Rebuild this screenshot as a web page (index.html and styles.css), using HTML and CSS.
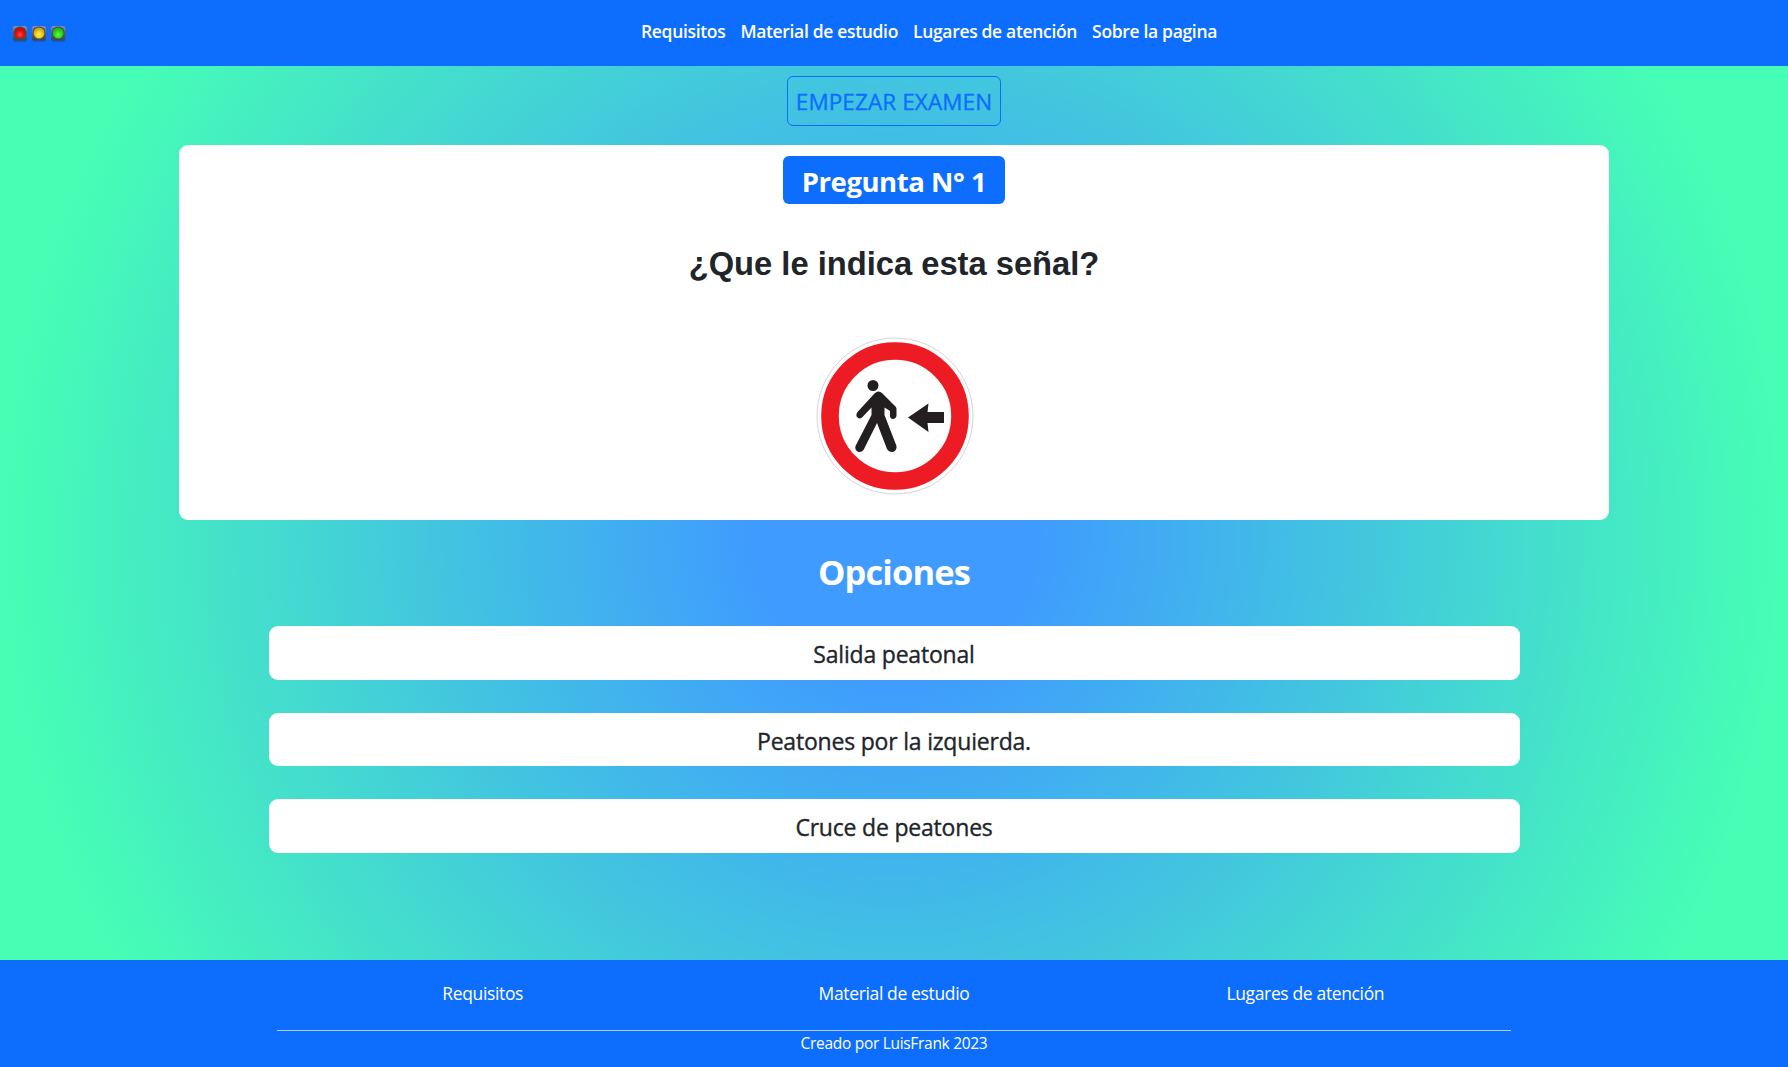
FILE: index.html
```html
<!DOCTYPE html>
<html lang="es">
<head>
<meta charset="utf-8">
<title>Examen de manejo</title>
<link rel="stylesheet" href="styles.css">
</head>
<body>
<header class="topbar">
  <svg class="logo" width="56" height="18" viewBox="0 0 56 18">
    <defs>
      <linearGradient id="case" x1="0" y1="0" x2="0" y2="1"><stop offset="0" stop-color="#8292b4"/><stop offset=".45" stop-color="#606570"/><stop offset="1" stop-color="#3c454b"/></linearGradient>
      <radialGradient id="red" cy=".65"><stop offset="0" stop-color="#ff5145"/><stop offset=".5" stop-color="#ee1712"/><stop offset="1" stop-color="#c80c0c"/></radialGradient>
      <radialGradient id="yellow" cy=".65"><stop offset="0" stop-color="#fff04a"/><stop offset=".5" stop-color="#f2d421"/><stop offset="1" stop-color="#cda91c"/></radialGradient>
      <radialGradient id="green" cy=".65"><stop offset="0" stop-color="#6dff45"/><stop offset=".5" stop-color="#31e51e"/><stop offset="1" stop-color="#25b81b"/></radialGradient>
    </defs>
    <g fill="#174a9c" opacity=".55"><rect x="1" y="3" width="14" height="14" rx="3"/><rect x="20" y="3" width="14" height="14" rx="3"/><rect x="39.300" y="3" width="14" height="14" rx="3"/></g>
    <g fill="url(#case)"><rect x=".8" y="1" width="14.300" height="14.500" rx="2.500"/><rect x="19.800" y="1" width="14.300" height="14.500" rx="2.500"/><rect x="39" y="1" width="14.300" height="14.500" rx="2.500"/></g>
    <g fill="#43484b"><circle cx="8" cy="7.800" r="6.300"/><circle cx="27" cy="7.800" r="6.300"/><circle cx="46.200" cy="7.800" r="6.300"/></g>
    <circle cx="8" cy="8" r="5.500" fill="url(#red)"/><circle cx="27" cy="8" r="5.500" fill="url(#yellow)"/><circle cx="46.200" cy="8" r="5.500" fill="url(#green)"/>
  </svg>
  <nav class="menu"><a>Requisitos</a><a>Material de estudio</a><a>Lugares de atención</a><a>Sobre la pagina</a></nav>
</header>
<main class="exam">
  <button class="start">EMPEZAR EXAMEN</button>
  <section class="question">
    <h2 class="number">Pregunta N° 1</h2>
    <h1 class="statement">¿Que le indica esta señal?</h1>
    <svg class="sign" width="160" height="160" viewBox="0 0 160 160">
      <circle cx="80" cy="80" r="78" fill="#fff" stroke="#d5d5da" stroke-width="1"/>
      <circle cx="80" cy="80" r="65" fill="#fff" stroke="#ed1c24" stroke-width="17.600"/>
      <g fill="#231f20">
        <circle cx="58" cy="49.500" r="5.500"/>
        <path d="M59.500 57.500Q63.500 53.500 67.500 57.500L80.500 70.500Q81.500 71.500 81.500 73V80Q80.500 83 78 83Q75 82.500 75 80V75L69.500 71.500V79L81.500 110Q82 114.500 78 116Q74 116.500 72 113L62 87L48.500 114Q46 117 42.500 115.500Q39.500 113.500 40.500 110L56.500 79V71.500L47 81.500Q44 83.500 42 81Q40.500 79 42.500 76Z"/>
        <path d="M93 81.500L113.500 67.500L112.500 76H129V87H112.500L113.500 96Z"/>
      </g>
    </svg>
  </section>
  <h2 class="options-title">Opciones</h2>
  <div class="options"><div class="option">Salida peatonal</div><div class="option">Peatones por la izquierda.</div><div class="option">Cruce de peatones</div></div>
</main>
<footer class="footer">
  <div class="links"><a>Requisitos</a><a>Material de estudio</a><a>Lugares de atención</a></div>
  <div class="credit">Creado por LuisFrank 2023</div>
</footer>
</body>
</html>
```
FILE: styles.css
```css
* { box-sizing: border-box; }
body {
  margin: 0;
  height: 1067px;
  display: flex;
  flex-direction: column;
  overflow: hidden;
  font-family: "Open Sans", "Noto Sans", sans-serif;
  color: #212529;
  background: radial-gradient(circle at center, #3f9bff 13%, #46ffb4 86%);
}
h1, h2 { margin: 0; }
.topbar {
  height: 66px;
  flex: none;
  display: flex;
  background: #0d6efd;
  color: #fff;
}
.logo { margin: 25px 0 0 12px; flex: none; }
.menu {
  display: flex;
  gap: 15px;
  margin-left: 573px;
  padding-top: 19px;
  font-size: 17.500px;
  font-weight: 600;
  line-height: 25px;
  letter-spacing: -.33px;
  white-space: nowrap;
}
.exam {
  flex: none;
  height: 894px;
  padding-top: 10px;
  display: flex;
  flex-direction: column;
  align-items: center;
}
.start {
  width: 214px;
  height: 50px;
  flex: none;
  padding: 2px 0 0;
  border: 1px solid #0d6efd;
  border-radius: 6px;
  background: none;
  color: #0d6efd;
  font: 400 22.500px/46px "Open Sans", sans-serif;
  -webkit-text-stroke: .35px #0d6efd;
  letter-spacing: .1px;
  white-space: nowrap;
}
.question {
  width: 1430px;
  height: 374.500px;
  flex: none;
  margin-top: 19px;
  padding-top: 11px;
  display: flex;
  flex-direction: column;
  align-items: center;
  background: #fff;
  border-radius: 9px;
}
.number {
  width: 222px;
  height: 48px;
  border-radius: 6px;
  background: #0d6efd;
  color: #fff;
  font-size: 27.500px;
  line-height: 51px;
  letter-spacing: -.45px;
  text-align: center;
}
.statement {
  margin-top: 40px;
  font: 700 32.700px/40px "Liberation Sans", Arial, sans-serif;
}
.sign { margin: 52px 0 0 2px; }
.options-title {
  margin-top: 26.500px;
  color: #fff;
  font-size: 34.500px;
  font-weight: 700;
  line-height: 51px;
  letter-spacing: -.9px;
}
.options {
  width: 1251px;
  margin-top: 29px;
  display: flex;
  flex-direction: column;
  gap: 33.200px;
}
.option {
  height: 53.500px;
  border-radius: 9px;
  background: #fff;
  font-size: 23px;
  line-height: 56px;
  letter-spacing: -.2px;
  -webkit-text-stroke: .35px #212529;
  text-align: center;
}
.footer {
  flex: 1;
  padding: 0 277px;
  background: #0d6efd;
  color: #fff;
}
.links {
  height: 71px;
  padding-top: 21px;
  display: grid;
  grid-template-columns: repeat(3, 1fr);
  border-bottom: 1px solid #aecffe;
  font-size: 17.500px;
  line-height: 25px;
  letter-spacing: -.36px;
  text-align: center;
}
.credit {
  font-size: 15.500px;
  line-height: 24px;
  letter-spacing: -.3px;
  text-align: center;
}
```
